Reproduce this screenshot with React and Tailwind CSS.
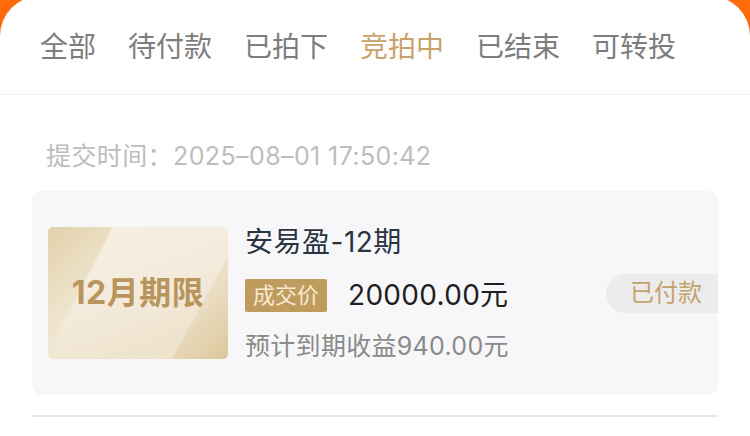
const tabs = ['全部', '待付款', '已拍下', '竞拍中', '已结束', '可转投'];

const font = { fontFamily: 'Inter, "Noto Sans CJK SC", sans-serif' };

const Thumb = () => (
  <div className="relative w-[180px] h-[132px] shrink-0 rounded-[5px] overflow-hidden bg-[linear-gradient(135deg,#e2d1ab_0%,#efe5cf_35%,#f2e9d6_60%,#dcc79c_100%)]">
    {/* light diagonal band */}
    <div className="absolute inset-0 bg-[linear-gradient(160deg,#f7f1e3_0%,#f3eadb_50%,#ebdfc4_100%)] [clip-path:polygon(36%_0,100%_0,100%_22%,69%_100%,0_100%,0_96%)]" />
    <div className="absolute inset-0 flex items-center justify-center">
      <span className="text-[32px] font-bold text-[#b8955c] tracking-[0.5px]">12月期限</span>
    </div>
  </div>
);

const App = () => {
  return (
    <div className="w-[750px] h-[436px] overflow-hidden bg-[#ff6b0a]" style={font}>
      <div className="-mt-1 bg-white rounded-t-[40px] h-[440px] pt-1">
        {/* tabs */}
        <div className="h-[95px] flex items-center gap-[32px] pl-[40px] border-b border-[#efefef]">
          {tabs.map((t) => (
            <span
              key={t}
              className={`text-[28px] leading-none ${t === '竞拍中' ? 'text-[#c8a26a]' : 'text-[#7d7d7d]'}`}
            >
              {t}
            </span>
          ))}
        </div>

        <div className="px-[32px]">
          <div className="h-[96px] flex items-center pl-[14px] pt-[28px]">
            <span className="text-[25px] tracking-[0.4px] text-[#bdbdbd]">提交时间：2025–08–01 17:50:42</span>
          </div>

          <div className="h-[204px] bg-[#f7f7f9] rounded-[10px] flex items-center pl-[16px] overflow-hidden">
            <Thumb />
            <div className="flex-1 pl-[17px] flex flex-col">
              <div className="h-[34px] flex items-center text-[28px] tracking-[0.5px] text-[#2a3340]">安易盈-12期</div>
              <div className="mt-[20px] h-[33px] flex items-center">
                <span className="h-[33px] w-[82px] flex items-center justify-center bg-[#c09b5e] text-[#f6ead3] text-[22px] rounded-[2px]">
                  成交价
                </span>
                <span className="ml-[21px] text-[28px] tracking-[0.3px] text-[#1f1f1f]">20000.00元</span>
              </div>
              <div className="mt-[20px] h-[30px] flex items-center text-[25px] tracking-[0.3px] text-[#8a8a8a]">预计到期收益940.00元</div>
            </div>
            <div className="self-center h-[39px] w-[112px] rounded-l-full bg-[#ececec] flex items-center pl-[24px] text-[24px] text-[#c4a26c]">
              已付款
            </div>
          </div>

          <div className="mt-[20px] h-[2px] bg-[#e6e6e6]" />
        </div>
      </div>
    </div>
  );
};

export default App;
